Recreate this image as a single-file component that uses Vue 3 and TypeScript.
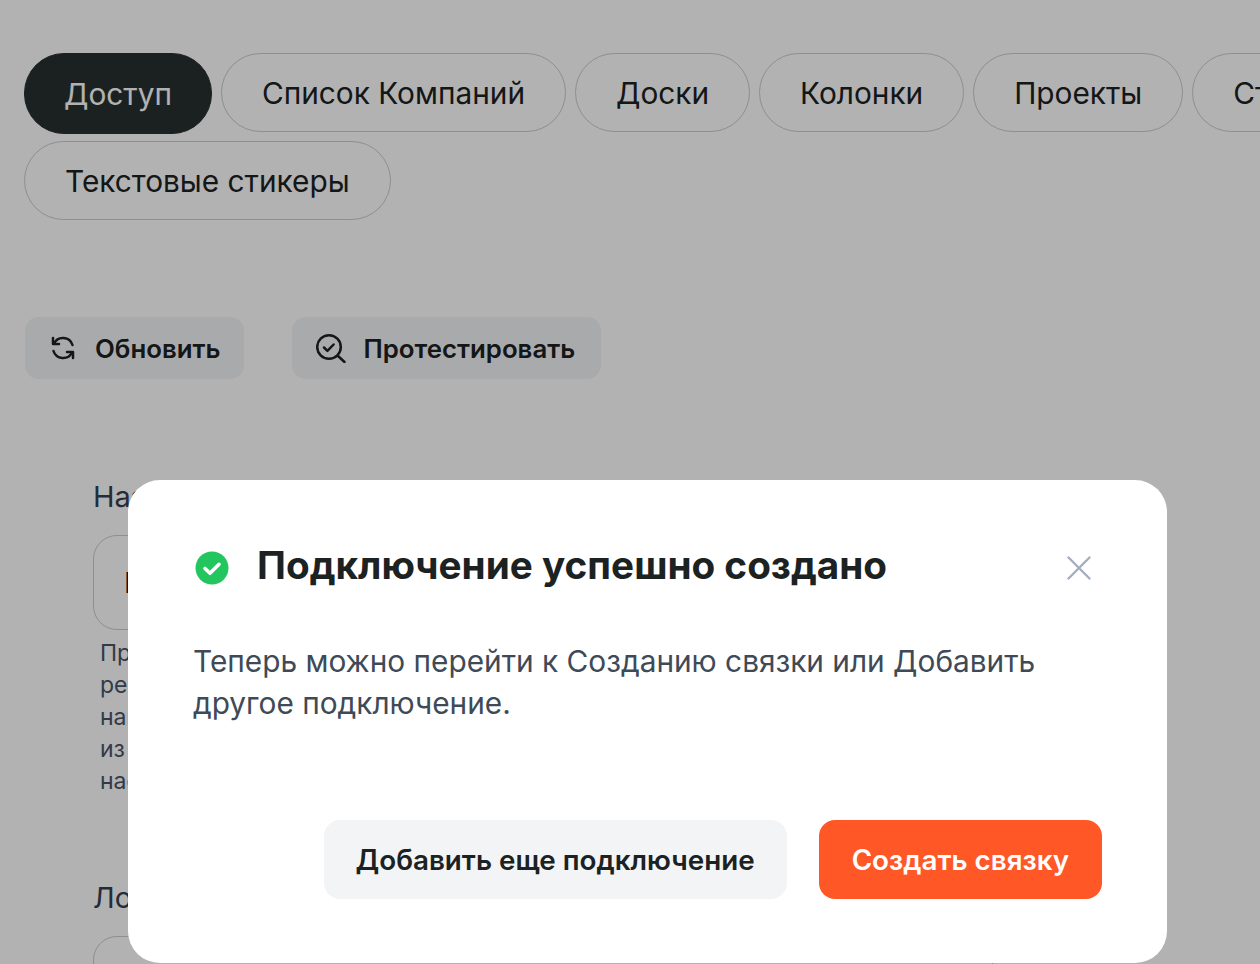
<script setup lang="ts">
import { ref } from 'vue'

const tabs = ['Доступ', 'Список Компаний', 'Доски', 'Колонки', 'Проекты', 'Стикеры', 'Текстовые стикеры']
const activeTab = ref('Доступ')
const hintLines = ['Придумайте название', 'ресурса, чтобы', 'найти его', 'из списка', 'настроек']
</script>

<template>
  <div class="page">
    <div class="content">
      <div class="tabs">
        <button
          v-for="tab in tabs"
          :key="tab"
          class="tab"
          :class="{ active: tab === activeTab }"
          @click="activeTab = tab"
        >
          {{ tab }}
        </button>
      </div>

      <div class="actions">
        <button class="action">
          <svg width="26" height="26" viewBox="0 0 26 26" fill="none" stroke="#1c2222" stroke-width="2.5" stroke-linecap="round" stroke-linejoin="round">
            <path d="M22.5 10A10 10 0 0 0 4 8.5" />
            <path d="M3 3v6h6" />
            <path d="M3.5 16A10 10 0 0 0 22 17.5" />
            <path d="M23 23v-6h-6" />
          </svg>
          <span>Обновить</span>
        </button>
        <button class="action">
          <svg width="30" height="30" viewBox="0 0 30 30" fill="none" stroke="#1c2222" stroke-width="2.5" stroke-linecap="round" stroke-linejoin="round">
            <circle cx="13" cy="14" r="11.8" />
            <path d="m8 14.5 3.4 3.4 6.2-6.4" />
            <path d="m22 23 6.5 6" />
          </svg>
          <span>Протестировать</span>
        </button>
      </div>

      <div class="form">
        <label class="label">Название</label>
        <div class="input"><span>Подключение</span></div>
        <div class="hint">
          <div v-for="line in hintLines" :key="line">{{ line }}</div>
        </div>
        <label class="label login">Логин</label>
        <div class="input"></div>
      </div>
    </div>

    <div class="overlay">
      <div class="modal">
        <div class="modal-head">
          <svg class="ok" width="34" height="34" viewBox="0 0 34 34">
            <circle cx="17" cy="17" r="16.5" fill="#22c55e" />
            <path d="m10 17.5 5 4.8 9-9" fill="none" stroke="#fff" stroke-width="3.6" stroke-linecap="round" stroke-linejoin="round" />
          </svg>
          <h2>Подключение успешно создано</h2>
          <svg class="close" width="24" height="24" viewBox="0 0 24 24" fill="none" stroke="#a3aebf" stroke-width="2.4" stroke-linecap="round">
            <path d="m1.5 1.5 21 21M22.5 1.5l-21 21" />
          </svg>
        </div>
        <p class="modal-text">Теперь можно перейти к Созданию связки или Добавить другое подключение.</p>
        <div class="modal-buttons">
          <button class="btn secondary">Добавить еще подключение</button>
          <button class="btn primary">Создать связку</button>
        </div>
      </div>
    </div>
  </div>
</template>

<style scoped>
.page {
  position: relative;
  width: 1260px;
  height: 964px;
  overflow: hidden;
  background: #fff;
  font-family: Inter, "Noto Sans", sans-serif;
  color: #1c2222;
}

.content {
  width: 1500px;
  padding: 53px 0 0 24px;
}

.tabs {
  display: flex;
  flex-wrap: wrap;
  align-items: flex-start;
  gap: 7px 9px;
}

.tab {
  height: 79px;
  padding: 0 40px;
  border: 1.5px solid #c9ccd3;
  border-radius: 40px;
  background: transparent;
  font-family: inherit;
  font-size: 29.8px;
  color: #1c2222;
}

.tab.active {
  height: 81px;
  padding: 0 39px;
  background: #283030;
  border-color: #283030;
  color: #fff;
}

.actions {
  display: flex;
  gap: 48px;
  margin: 97px 0 0 1px;
}

.action {
  display: flex;
  align-items: center;
  gap: 19px;
  height: 62px;
  padding: 0 24px 0 25px;
  border: none;
  border-radius: 14px;
  background: #f3f4f6;
  font-family: inherit;
  font-size: 25.8px;
  font-weight: 600;
  color: #1c2222;
}

.action + .action {
  gap: 17px;
  padding: 0 26px 0 24px;
}

.form {
  width: 900px;
  margin: 100px 0 0 69px;
}

.label {
  display: block;
  height: 36px;
  font-size: 29px;
  line-height: 36px;
  color: #344054;
}

.label.login {
  margin-top: 83px;
}

.input {
  display: flex;
  align-items: center;
  height: 93px;
  margin-top: 20px;
  padding-left: 30px;
  border: 1.5px solid #c9ccd3;
  border-radius: 24px;
  font-size: 28px;
}

.hint {
  margin: 7px 0 0 7px;
  font-size: 23px;
  line-height: 32px;
  color: #475467;
}

.overlay {
  position: absolute;
  inset: 0;
  padding: 480px 0 0 128px;
  background: rgba(0, 0, 0, 0.3);
}

.modal {
  box-sizing: border-box;
  display: flex;
  flex-direction: column;
  width: 1039px;
  height: 483px;
  padding: 64px 65px 64px 65px;
  border-radius: 32px;
  background: #fff;
}

.modal-head {
  display: flex;
  align-items: center;
  height: 44px;
}

.ok {
  flex: none;
  margin: 4px 28px 0 2px;
}

.modal-head h2 {
  flex: 1;
  margin: -2px 0 0;
  font-size: 38.7px;
  font-weight: 700;
  line-height: 44px;
  color: #1c2222;
}

.close {
  flex: none;
  margin: 4px 11px 0 0;
}

.modal-text {
  width: 880px;
  margin: 52px 0 0;
  font-size: 29.8px;
  line-height: 42px;
  color: #404a57;
}

.modal-buttons {
  display: flex;
  justify-content: flex-end;
  gap: 32px;
  margin-top: 96px;
}

.btn {
  height: 79px;
  padding: 0 32px;
  border: none;
  border-radius: 16px;
  font-family: inherit;
  font-size: 27.8px;
  font-weight: 600;
}

.secondary {
  background: #f3f4f6;
  color: #1c2222;
}

.primary {
  padding: 0 33px;
  background: #ff5726;
  color: #fff;
}
</style>
